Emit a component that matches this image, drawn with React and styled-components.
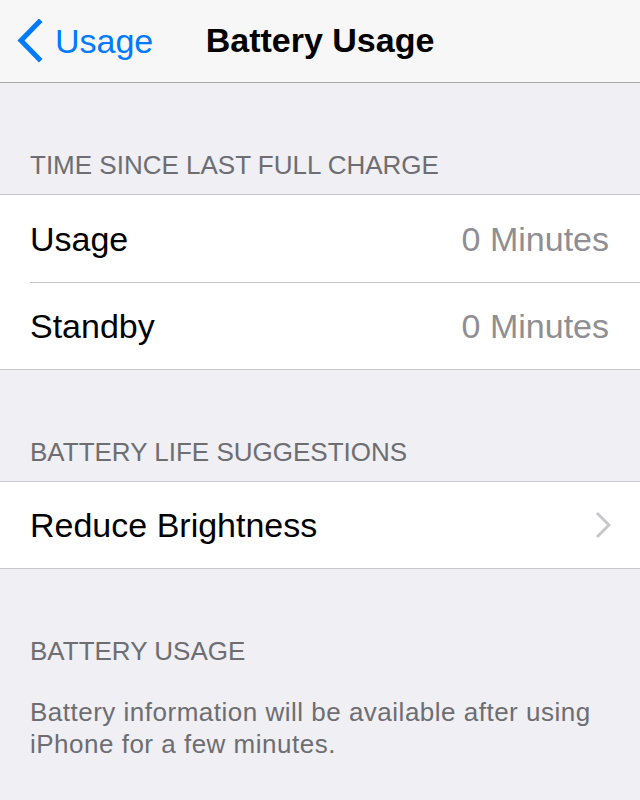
import styled, { createGlobalStyle } from 'styled-components';

const GlobalStyle = createGlobalStyle`
  html, body {
    margin: 0;
    padding: 0;
    background: #efeff4;
    font-family: "Liberation Sans", Arial, sans-serif;
    -webkit-font-smoothing: antialiased;
  }
`;

const Screen = styled.div`
  width: 640px;
  min-height: 800px;
  background: #efeff4;
  overflow: hidden;
`;

const NavBar = styled.header`
  position: relative;
  height: 82px;
  display: flex;
  align-items: center;
  justify-content: center;
  background: #f7f7f7;
  border-bottom: 1px solid #a9a9ac;
`;

const BackButton = styled.button`
  position: absolute;
  left: 17px;
  top: 0;
  height: 82px;
  display: flex;
  align-items: center;
  gap: 12px;
  padding: 0;
  border: 0;
  background: none;
  color: #007aff;
  font-family: inherit;
  font-size: 34px;
  cursor: pointer;
`;

const Title = styled.h1`
  margin: 0 0 2px;
  font-size: 34px;
  font-weight: bold;
  color: #000;
`;

const SectionHeader = styled.div`
  padding: 69px 30px 16px;
  font-size: 26px;
  line-height: 26px;
  color: #6d6d72;
  text-transform: uppercase;
`;

const Group = styled.div`
  background: #fff;
  border-top: 1px solid #c8c7cc;
  border-bottom: 1px solid #c8c7cc;
`;

const Row = styled.div`
  box-sizing: border-box;
  display: flex;
  align-items: center;
  height: ${p => p.$height || 87}px;
  margin-left: 30px;
  padding-right: 31px;
  & + & {
    border-top: 1px solid #c8c7cc;
  }
`;

const Label = styled.span`
  flex: 1;
  font-size: 34px;
  line-height: 34px;
  color: #000;
`;

const Value = styled.span`
  font-size: 34px;
  line-height: 34px;
  color: #8e8e93;
`;

const Footer = styled.p`
  margin: 16px 0 0;
  padding: 0 30px;
  font-size: 26px;
  line-height: 32px;
  letter-spacing: 0.5px;
  color: #6d6d72;
`;

const BackChevron = () => (
  <svg width="26" height="44" viewBox="0 0 26 44">
    <path d="M22 3 L4 21.5 L22 40" fill="none" stroke="#007aff" strokeWidth="5" strokeLinecap="square" />
  </svg>
);

const Disclosure = () => (
  <svg width="16" height="28" viewBox="0 0 16 28" style={{ marginRight: -2 }}>
    <path d="M2 2 L14 14 L2 26" fill="none" stroke="#c7c7cc" strokeWidth="3" />
  </svg>
);

export default function App () {
  return (
    <Screen>
      <GlobalStyle />
      <NavBar>
        <BackButton>
          <BackChevron />
          Usage
        </BackButton>
        <Title>Battery Usage</Title>
      </NavBar>

      <SectionHeader>Time Since Last Full Charge</SectionHeader>
      <Group>
        <Row>
          <Label>Usage</Label>
          <Value>0 Minutes</Value>
        </Row>
        <Row>
          <Label>Standby</Label>
          <Value>0 Minutes</Value>
        </Row>
      </Group>

      <SectionHeader>Battery Life Suggestions</SectionHeader>
      <Group>
        <Row $height={86}>
          <Label>Reduce Brightness</Label>
          <Disclosure />
        </Row>
      </Group>

      <SectionHeader>Battery Usage</SectionHeader>
      <Footer>
        Battery information will be available after using iPhone for a few minutes.
      </Footer>
    </Screen>
  );
}
